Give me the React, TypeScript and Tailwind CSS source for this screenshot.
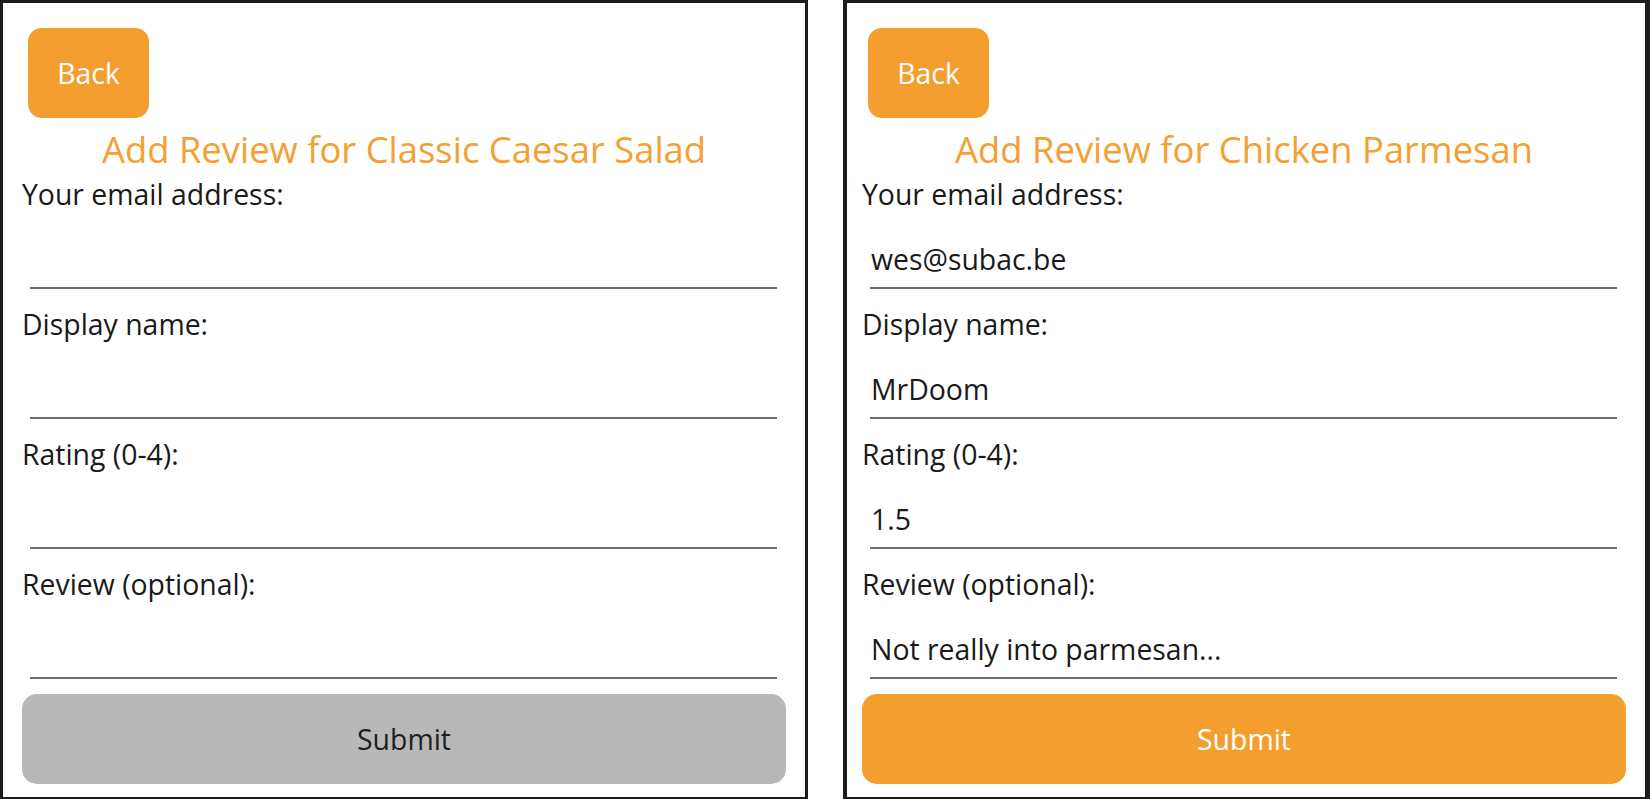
import React from 'react'

type Field = { label: string; value: string }

const emptyFields: Field[] = [
  { label: 'Your email address:', value: '' },
  { label: 'Display name:', value: '' },
  { label: 'Rating (0-4):', value: '' },
  { label: 'Review (optional):', value: '' },
]

const filledFields: Field[] = [
  { label: 'Your email address:', value: 'wes@subac.be' },
  { label: 'Display name:', value: 'MrDoom' },
  { label: 'Rating (0-4):', value: '1.5' },
  { label: 'Review (optional):', value: 'Not really into parmesan...' },
]

function ReviewForm({ dish, fields, ready, frame }: { dish: string; fields: Field[]; ready: boolean; frame: string }) {
  return (
    <div className={`h-[799px] shrink-0 border-[3px] border-b-2 border-[#1c1c1c] bg-white ${frame}`}>
      {/* Back */}
      <button className="ml-[6px] mt-[25px] w-[121px] h-[90px] rounded-[14px] bg-[#f49e30] text-white text-[28.4px] leading-none">
        Back
      </button>

      <h1 className="mt-[9px] text-center text-[36.4px] leading-[44px] text-[#f4a035] font-normal whitespace-nowrap">
        Add Review for {dish}
      </h1>

      {/* Fields */}
      <div className="mt-[7px] flex flex-col gap-[19px]">
        {fields.map(f => (
          <div key={f.label}>
            <label className="block text-[28.4px] leading-[32px] text-[#1a1a1a]">{f.label}</label>
            <input
              readOnly
              value={f.value}
              className="block ml-[8px] mr-[9px] w-[calc(100%-17px)] h-[79px] pt-[20px] px-px text-[28.4px] text-[#1a1a1a] bg-transparent outline-none border-b-2 border-[#6e6e6e]"
            />
          </div>
        ))}
      </div>

      <button
        className={`mt-[15px] w-full h-[90px] rounded-[15px] text-[28.4px] leading-none ${
          ready ? 'bg-[#f49e30] text-white' : 'bg-[#b8b8b8] text-[#1f1f1f]'
        }`}
      >
        Submit
      </button>
    </div>
  )
}

export default function App() {
  return (
    <div className="w-[1650px] h-[799px] bg-white flex gap-[35px] overflow-hidden" style={{ fontFamily: '"Open Sans", "Noto Sans", sans-serif' }}>
      <ReviewForm dish="Classic Caesar Salad" fields={emptyFields} ready={false} frame="w-[808px] pl-[19px] pr-[19px]" />
      <ReviewForm dish="Chicken Parmesan" fields={filledFields} ready={true} frame="w-[807px] border-l-4 border-r-[5px] pl-[15px] pr-[19px]" />
    </div>
  )
}
